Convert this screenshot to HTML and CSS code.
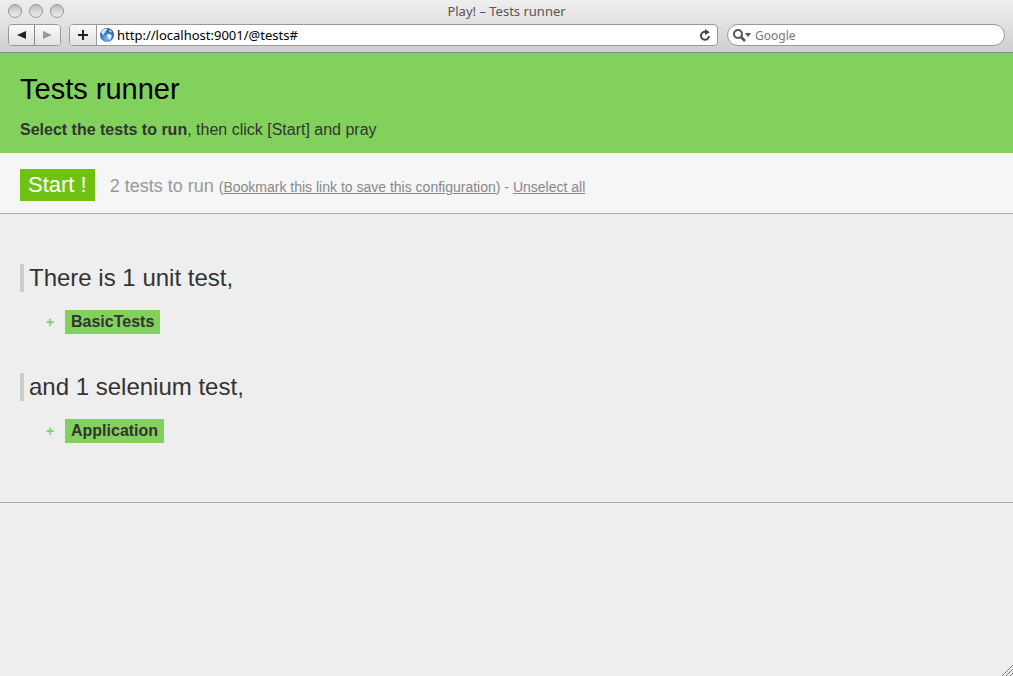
FILE: index.html
```html
<!DOCTYPE html>
<html lang="en">
<head>
<meta charset="utf-8">
<title>Play! – Tests runner</title>
<link rel="stylesheet" href="styles.css">
</head>
<body>
<div class="chrome">
  <div class="titlebar">
    <div class="lights">
      <button class="light" aria-label="Close"></button>
      <button class="light" aria-label="Minimize"></button>
      <button class="light" aria-label="Zoom"></button>
    </div>
    <div class="window-title">Play! – Tests runner</div>
  </div>
  <div class="navbar">
    <div class="nav-buttons">
      <button class="nav-button" aria-label="Back"><svg width="9" height="8" viewBox="0 0 9 8"><path d="M0 4 9 0v8z" fill="#222"/></svg></button>
      <button class="nav-button" aria-label="Forward"><svg width="9" height="8" viewBox="0 0 9 8"><path d="M9 4 0 0v8z" fill="#999"/></svg></button>
    </div>
    <div class="address">
      <button class="add" aria-label="Add bookmark"><svg width="10" height="10" viewBox="0 0 10 10"><path d="M4 0h2v4h4v2H6v4H4V6H0V4h4z" fill="#222"/></svg></button>
      <svg class="globe" width="16" height="16" viewBox="0 0 16 16">
        <defs><radialGradient id="sea" cx=".5" cy=".75" r=".7"><stop offset="0" stop-color="#7fc0f0"/><stop offset=".5" stop-color="#3f84cb"/><stop offset="1" stop-color="#204a8c"/></radialGradient></defs>
        <circle cx="8" cy="8" r="7" fill="url(#sea)"/>
        <path d="M2 5 4.500 2.300 8 1.600 8.300 3 6.800 4 6.300 5.600 4.600 6.400 5.300 8 3.500 7.600z" fill="#d9e9f6"/>
        <path d="M8.300 7.300 11 7 12.800 8.600 12 11.200 9.800 13.200 9.300 10.600 8 9.300z" fill="#e7f2fa"/>
        <path d="M9.500 2.300 12 3.300 13.200 5 11.600 5.600 10.200 4.500z" fill="#a9cbe8"/>
      </svg>
      <input class="url" type="text" aria-label="Address" value="http://localhost:9001/@tests#">
      <button class="reload" aria-label="Reload"><svg width="12" height="13" viewBox="0 0 12 13"><path d="M6.500 2.800H5.700a4 4 0 1 0 4.300 4.300" fill="none" stroke="#444" stroke-width="2"/><path d="M6 0 10.800 3.200 6 6z" fill="#444"/></svg></button>
    </div>
    <div class="search">
      <svg width="18" height="13" viewBox="0 0 18 13"><circle cx="5" cy="5" r="4" fill="none" stroke="#555" stroke-width="2"/><path d="m8 8 4 4" stroke="#555" stroke-width="2.500"/><path d="M12 4h6l-3 4z" fill="#555"/></svg>
      <input class="search-input" type="text" aria-label="Search" placeholder="Google">
    </div>
  </div>
</div>
<header class="header">
  <h1 class="title">Tests runner</h1>
  <p class="subtitle"><strong>Select the tests to run</strong>, then click [Start] and pray</p>
</header>
<div class="actions">
  <button class="start">Start !</button>
  <p class="summary">2 tests to run <span class="links">(<a href="#">Bookmark this link to save this configuration</a>) - <a href="#">Unselect all</a></span></p>
</div>
<main class="tests">
  <section class="group">
    <h2 class="group-title">There is 1 unit test,</h2>
    <ul class="list">
      <li class="item"><button class="expand" aria-label="Expand BasicTests">+</button><a class="test" href="#">BasicTests</a></li>
    </ul>
  </section>
  <section class="group">
    <h2 class="group-title">and 1 selenium test,</h2>
    <ul class="list">
      <li class="item"><button class="expand" aria-label="Expand Application">+</button><a class="test" href="#">Application</a></li>
    </ul>
  </section>
</main>
<svg class="grip" width="12" height="12" viewBox="0 0 12 12"><path d="M1 12 12 1M5 12l7-7M9 12l3-3" stroke="#777" fill="none"/><path d="M2 12 12 2M6 12l6-6M10 12l2-2" stroke="#fff" fill="none" stroke-width=".5"/></svg>
</body>
</html>
```
FILE: styles.css
```css
* { box-sizing: border-box; }
html { background: #fff; }
body {
  margin: 0;
  min-height: 100vh;
  background: #eee;
  color: #333;
  font-family: "Liberation Sans", Arial, sans-serif;
  font-size: 16px;
}
button, input { margin: 0; padding: 0; border: 0; background: none; font: inherit; }
h1, h2, p, ul { margin: 0; padding: 0; font-weight: normal; }

.chrome {
  border-bottom: 1px solid #888;
  border-radius: 5px 5px 0 0;
  background: linear-gradient(#eee, #e2e2e2 45%, #cfcfcf);
  font-family: "Noto Sans", sans-serif;
}
.titlebar {
  display: grid;
  grid-template-columns: 1fr auto 1fr;
  align-items: center;
  height: 24px;
  padding: 0 8px;
}
.lights { display: flex; gap: 7px; padding-bottom: 2px; }
.light {
  width: 14px;
  height: 14px;
  border: 1px solid #959595;
  border-radius: 50%;
  background: linear-gradient(#bbb, #d8d8d8 50%, #eee);
}
.window-title { padding-bottom: 2px; color: #555; font-size: 13px; line-height: 22px; }
.navbar { display: flex; padding: 0 8px 6px; }
.nav-buttons, .address, .search {
  display: flex;
  align-items: center;
  height: 22px;
  border: 1px solid #999;
  border-radius: 4px;
  background: #fff;
}
.nav-buttons { width: 53px; margin-right: 8px; overflow: hidden; }
.nav-button, .add {
  display: flex;
  align-items: center;
  justify-content: center;
  height: 20px;
  background: linear-gradient(#fafafa, #e2e2e2);
}
.nav-button { flex: 1; }
.nav-button:first-child { border-right: 1px solid #888; }
.address { flex: 1; margin-right: 9px; overflow: hidden; }
.add { width: 27px; border-right: 1px solid #999; }
.globe { margin: 0 2px; }
.url { flex: 1; min-width: 0; color: #000; font-size: 13px; }
.reload { display: flex; margin-right: 6px; }
.search { width: 278px; padding-left: 5px; border-radius: 11px; }
.search-input { flex: 1; min-width: 0; margin: 0 4px; font-size: 12px; }
.search-input::placeholder { color: #777; opacity: 1; }

.header { padding: 20px 20px 13px; background: #83d15d; }
.title { color: #000; font-size: 29px; line-height: 32px; }
.subtitle { margin-top: 15px; line-height: 20px; }
.actions {
  display: flex;
  align-items: center;
  gap: 15px;
  padding: 16px 20px 12px;
  border-bottom: 1px solid #aaa;
  background: #f6f6f6;
}
.start {
  height: 32px;
  padding: 0 8px;
  background: #6fc213;
  color: #fff;
  font-size: 22px;
  line-height: 32px;
}
.summary { padding-top: 3px; color: #999; font-size: 18px; }
.links { color: #888; font-size: 14px; }
.links a { color: inherit; }

.tests { padding: 50px 20px 59px; border-bottom: 1px solid #aaa; }
.group + .group { margin-top: 39px; }
.group-title {
  padding-left: 5px;
  border-left: 4px solid #ccc;
  font-size: 24px;
  line-height: 28px;
}
.list { margin-top: 18px; padding-left: 26px; list-style: none; }
.item { display: flex; align-items: center; }
.expand { width: 19px; color: #83d15d; font-size: 14px; font-weight: bold; text-align: left; }
.test {
  padding: 0 6px;
  background: #83d15d;
  color: #333;
  font-weight: bold;
  line-height: 24px;
  text-decoration: none;
}
.grip { position: fixed; right: 0; bottom: 0; }
```
